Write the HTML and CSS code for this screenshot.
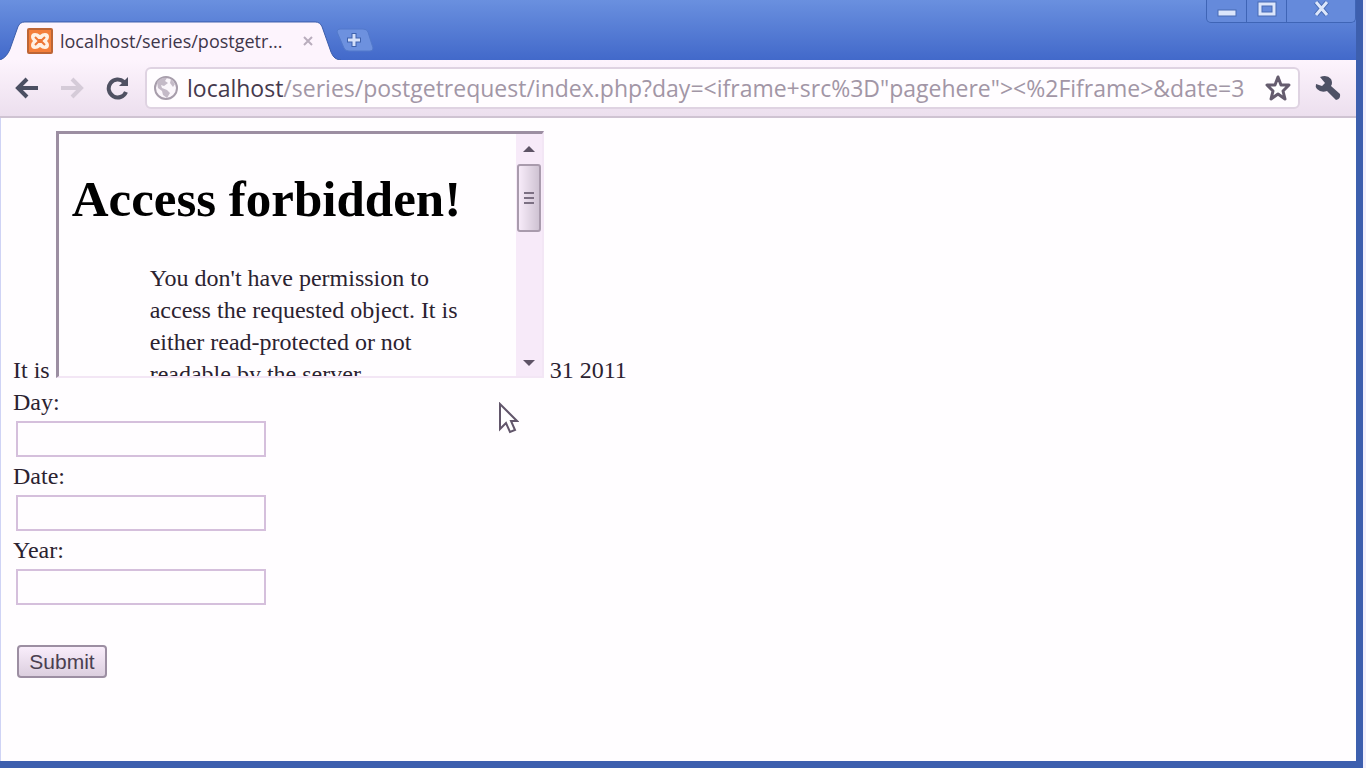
FILE: index.html
```html
<!DOCTYPE html>
<html lang="en">
<head>
<meta charset="utf-8">
<title>localhost/series/postgetrequest/index.php</title>
<link rel="stylesheet" href="styles.css">
</head>
<body>
<div class="window">
  <header class="titlebar">
    <div class="tab">
      <svg class="tab-shape" viewBox="0 0 344 40" preserveAspectRatio="none" aria-hidden="true"><path d="M0 40C5 38 8 34 10 29L18 6Q20 1 25 1H317Q322 1 324 6L333 32Q336 40 343 40Z" fill="#fdf4fd"/><path d="M0 40C5 38 8 34 10 29L18 6Q20 1 25 1H317Q322 1 324 6L333 32Q336 40 343 40" fill="none" stroke="#3a5ba9"/></svg>
      <svg class="favicon" viewBox="0 0 26 26" aria-hidden="true"><rect x="1" y="1" width="24" height="24" rx="1" fill="#f47f3b" stroke="#bd6536" stroke-width="2"/><path d="M8 5Q11 5 13 7Q15 5 18 5Q22 5 22 9Q22 11 20 13Q22 15 22 17Q22 21 18 21Q15 21 13 19Q11 21 8 21Q4 21 4 17Q4 15 6 13Q4 11 4 9Q4 5 8 5Z" fill="#fff1e4"/><path d="M8 9L11 12H15L18 9M8 17L11 14H15L18 17" fill="none" stroke="#ee7636" stroke-width="2"/></svg>
      <span class="tab-title">localhost/series/postgetr...</span>
      <button class="tab-close" aria-label="Close tab"><svg viewBox="0 0 12 12" width="12" height="12"><path d="M2 2L10 10M10 2L2 10" stroke="#b9adbd" stroke-width="2"/></svg></button>
    </div>
    <button class="new-tab" aria-label="New tab"><svg viewBox="0 0 38 24" width="38" height="24"><path d="M4 1H27Q31 1 32 4L37 20Q37 23 34 23H13Q9 23 8 20L1 4Q1 1 4 1Z" fill="#6d91df" stroke="#5279cb"/><path d="M18 5V19M11 12H25" stroke="#3f62ad" stroke-width="5"/><path d="M18 6V18M12 12H24" stroke="#d5e0fa" stroke-width="3"/></svg></button>
    <div class="controls">
      <button class="control" aria-label="Minimize"><svg viewBox="0 0 20 20" width="20" height="20"><rect x="1" y="10" width="18" height="6" fill="#dce6fb" stroke="#486bb4"/></svg></button>
      <button class="control" aria-label="Maximize"><svg viewBox="0 0 20 20" width="20" height="20"><rect x="3" y="4" width="14" height="10" fill="none" stroke="#486bb4" stroke-width="5"/><rect x="3" y="4" width="14" height="10" fill="none" stroke="#dce6fb" stroke-width="3"/></svg></button>
      <button class="control control-close" aria-label="Close"><svg viewBox="0 0 20 20" width="20" height="20"><path d="M5 2L16 15M16 2L5 15" stroke="#486bb4" stroke-width="5"/><path d="M5 2L16 15M16 2L5 15" stroke="#dce6fb" stroke-width="3"/></svg></button>
    </div>
  </header>

  <nav class="toolbar">
    <button class="tool" aria-label="Back"><svg viewBox="0 0 26 24" width="26" height="24"><path d="M13 3L4 12L13 21M5 12H24" fill="none" stroke="#4b4f62" stroke-width="4"/></svg></button>
    <button class="tool" aria-label="Forward"><svg viewBox="0 0 26 24" width="26" height="24"><path d="M13 3L22 12L13 21M21 12H2" fill="none" stroke="#d5cbd8" stroke-width="4"/></svg></button>
    <button class="tool reload" aria-label="Reload"><svg viewBox="0 0 26 24" width="26" height="24"><path d="M20 6A9 9 0 1 0 22 16" fill="none" stroke="#4f5162" stroke-width="4"/><path d="M24 1V10H15Z" fill="#4f5162"/></svg></button>
    <div class="address">
      <svg class="globe" viewBox="0 0 26 26" width="26" height="26" aria-hidden="true"><circle cx="13" cy="13" r="11" fill="#fbf6fb" stroke="#a79dab" stroke-width="2"/><path d="M4 7Q8 2 14 3L12 6L15 8L11 11L8 10L9 13L14 15L17 18L14 23L10 20L9 16L5 13ZM18 4L22 9L20 12L17 8Z" fill="#c4bac7"/></svg>
      <a class="url" href="#"><span class="host">localhost</span>/series/postgetrequest/index.php?day=&lt;iframe+src%3D"pagehere"&gt;&lt;%2Fiframe&gt;&amp;date=3</a>
      <button class="star" aria-label="Bookmark"><svg viewBox="0 0 28 28" width="28" height="28"><path d="M14 3L17 11L25 11L19 17L21 25L14 20L7 25L9 17L3 11L11 11Z" fill="#fff" stroke="#655c6e" stroke-width="3" stroke-linejoin="round"/></svg></button>
    </div>
    <button class="tool wrench" aria-label="Menu"><svg viewBox="0 0 28 28" width="28" height="28"><path d="M6 3Q13 0 17 5Q19 9 17 12L26 20Q27 25 22 26L13 17Q7 19 3 15Q1 13 2 10L8 12L11 9Z" fill="#4e5165"/></svg></button>
  </nav>

  <main class="page">
    <div class="sentence">It is
      <section class="frame" aria-label="Embedded page">
        <div class="frame-view">
          <div class="frame-body">
            <h1>Access forbidden!</h1>
            <p>You don't have permission to access the requested object. It is either read-protected or not readable by the server.</p>
          </div>
          <div class="scrollbar" aria-hidden="true">
            <svg viewBox="0 0 12 6" width="12" height="6"><path d="M0 6L6 0L12 6Z" fill="#5e5366"/></svg>
            <div class="thumb"><svg viewBox="0 0 12 14" width="12" height="14"><path d="M1 2H11M1 7H11M1 12H11" stroke="#7c7083" stroke-width="2"/></svg></div>
            <svg class="down" viewBox="0 0 12 6" width="12" height="6"><path d="M0 0L6 6L12 0Z" fill="#5e5366"/></svg>
          </div>
        </div>
      </section>
      31 2011</div>
    <form class="form">
      <label for="day">Day:</label>
      <input id="day" type="text">
      <label for="date">Date:</label>
      <input id="date" type="text">
      <label for="year">Year:</label>
      <input id="year" type="text">
      <button class="submit" type="button">Submit</button>
    </form>
  </main>
  <svg class="pointer" viewBox="0 0 20 32" width="20" height="32" aria-hidden="true"><path d="M1 2V27L7 21L11 30L16 28L12 19H18Z" fill="#fff" stroke="#62566b" stroke-width="2"/></svg>
</div>
</body>
</html>
```
FILE: styles.css
```css
* { box-sizing: border-box; }
body {
  margin: 0;
  background: #f1effc;
  color: #2b2230;
  font-family: "Liberation Serif", serif;
  font-size: 24px;
}
button { margin: 0; padding: 0; border: 0; background: none; font: inherit; }
svg { display: block; flex: none; }

.window {
  position: relative;
  display: flex;
  flex-direction: column;
  min-height: 100vh;
  margin-right: 3px;
  border: solid #3d5fae;
  border-width: 0 7px 7px 0;
  box-shadow: inset 1px 0 #cfd3f5;
  background: #fffdff;
}

.titlebar {
  display: flex;
  align-items: flex-end;
  height: 60px;
  background: linear-gradient(#6a90df, #4269ca);
}
.tab {
  position: relative;
  display: flex;
  align-items: center;
  width: 342px;
  height: 39px;
  padding: 0 28px 0 27px;
}
.tab-shape { position: absolute; inset: 0; width: 100%; height: 100%; }
.favicon { position: relative; width: 26px; height: 26px; }
.tab-title {
  position: relative;
  flex: 1;
  margin-left: 7px;
  color: #40364a;
  font-family: "Open Sans", sans-serif;
  font-size: 18px;
  white-space: nowrap;
}
.tab-close { position: relative; }
.new-tab { margin: 0 auto 8px -6px; }

.controls {
  display: flex;
  align-self: flex-start;
  height: 23px;
  border: 1px solid #3f65b6;
  border-top: 0;
  border-radius: 0 0 5px 5px;
  background: #658adb;
}
.control { display: flex; justify-content: center; width: 40px; border-right: 1px solid #3f65b6; }
.control-close { width: 68px; border-right: 0; }

.toolbar {
  display: flex;
  align-items: center;
  height: 58px;
  padding: 0 14px;
  border-bottom: 2px solid #cfc3d2;
  background: linear-gradient(#fdf4fd, #ecdfee);
}
.tool { margin-right: 19px; }
.reload { margin-right: 15px; }
.address {
  display: flex;
  flex: 1;
  align-items: center;
  min-width: 0;
  height: 42px;
  padding: 0 6px 0 6px;
  border: 2px solid #dfd3e2;
  border-radius: 6px;
  background: #fffdff;
}
.url {
  flex: 1;
  min-width: 0;
  margin-left: 8px;
  overflow: hidden;
  color: #a296a6;
  font-family: "Open Sans", sans-serif;
  font-size: 23px;
  text-decoration: none;
  white-space: nowrap;
}
.host { color: #45394d; }
.star { margin-left: 5px; }
.wrench { margin: 0 0 0 14px; }

.page { flex: 1; padding: 13px; line-height: 32px; }
.sentence { white-space: nowrap; }
.frame {
  display: inline-block;
  width: 488px;
  height: 247px;
  overflow: hidden;
  border: 2px solid #f3e6f5;
  border-top: 3px solid #9c8ea2;
  border-left: 3px solid #9c8ea2;
  white-space: normal;
}
.frame-view { display: flex; height: 100%; }
.frame-body { flex: 1; padding: 0 46px 0 13px; overflow: hidden; }
.frame h1 {
  margin: 36px 0 0;
  color: #000;
  font-size: 51px;
  line-height: 58px;
  white-space: nowrap;
}
.frame p { margin: 34px 0 0 78px; }
.scrollbar {
  display: flex;
  flex-direction: column;
  align-items: center;
  width: 26px;
  padding: 12px 0 10px;
  background: #f7eaf9;
}
.thumb {
  display: flex;
  align-items: center;
  justify-content: center;
  width: 24px;
  height: 68px;
  margin-top: 12px;
  border: 2px solid #a99bad;
  border-radius: 3px;
  background: linear-gradient(90deg, #f7ebf9, #cfc3d3);
}
.down { margin-top: auto; }

.form { display: flex; flex-direction: column; align-items: flex-start; }
.form input {
  width: 250px;
  height: 36px;
  margin: 3px 0 3px 3px;
  padding: 2px 6px;
  border: 2px solid #d5bfdc;
  background: #fffdff;
  font: inherit;
}
.submit {
  width: 90px;
  height: 33px;
  margin: 37px 0 0 4px;
  border: 2px solid #9c8ea2;
  border-radius: 4px;
  background: linear-gradient(#f9edfb, #dccfdf);
  color: #4a4050;
  font-family: "Liberation Sans", sans-serif;
  font-size: 21px;
  line-height: 28px;
}
.pointer { position: absolute; left: 499px; top: 402px; }
```
